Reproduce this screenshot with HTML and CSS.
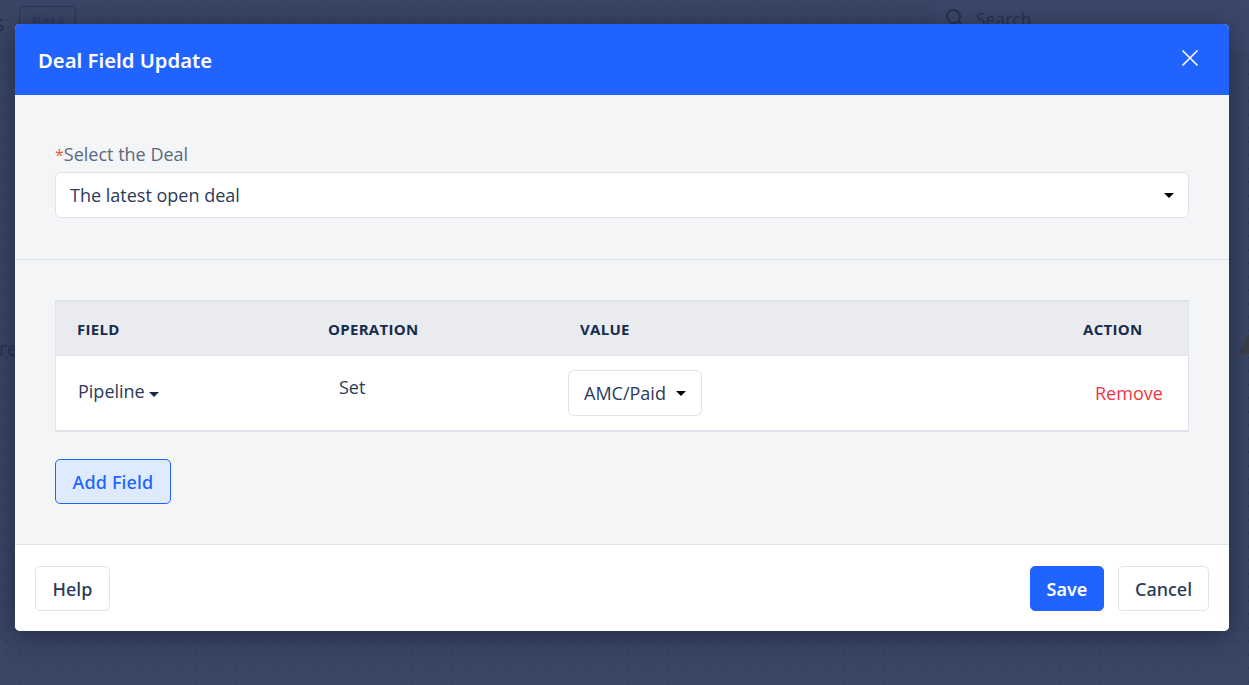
FILE: index.html
```html
<!DOCTYPE html>
<html lang="en">
<head>
<meta charset="utf-8">
<title>Deal Field Update</title>
<link rel="stylesheet" href="styles.css">
</head>
<body>
<div class="page">
  <div class="topbar">
    <span class="page-title">s</span>
    <span class="beta">Beta</span>
    <div class="search">
      <svg class="search-icon" width="20" height="20" viewBox="0 0 20 20"><circle cx="8.5" cy="8.5" r="6.5" fill="none" stroke="currentColor" stroke-width="2"/><path d="M13.5 13.5L19 19" stroke="currentColor" stroke-width="2"/></svg>
      <span>Search</span>
    </div>
  </div>
  <div class="behind-row">
    <span class="behind-text">re</span>
    <span class="warn"></span>
  </div>
</div>
<div class="overlay">
  <section class="modal">
    <header class="modal-head">
      <h1>Deal Field Update</h1>
      <svg class="close" width="18" height="18" viewBox="0 0 18 18"><path d="M1.5 1.5L16.5 16.5M16.5 1.5L1.5 16.5" stroke="#fff" stroke-width="1.6"/></svg>
    </header>
    <div class="modal-body">
      <div class="deal-section">
        <label class="deal-label"><span class="req">*</span>Select the Deal</label>
        <div class="select"><span>The latest open deal</span><i class="caret"></i></div>
      </div>
      <div class="fields-section">
        <div class="table">
          <div class="row head">
            <div class="c-field">FIELD</div>
            <div class="c-op">OPERATION</div>
            <div class="c-value">VALUE</div>
            <div class="c-action">ACTION</div>
          </div>
          <div class="row data">
            <div class="c-field pipeline">Pipeline <i class="caret navy"></i></div>
            <div class="c-op set">Set</div>
            <div class="c-value"><div class="mini-select"><span>AMC/Paid</span><i class="caret"></i></div></div>
            <div class="c-action remove">Remove</div>
          </div>
        </div>
        <button class="btn add">Add Field</button>
      </div>
    </div>
    <footer class="modal-foot">
      <button class="btn plain help">Help</button>
      <div class="foot-right">
        <button class="btn primary">Save</button>
        <button class="btn plain cancel">Cancel</button>
      </div>
    </footer>
  </section>
</div>
</body>
</html>
```
FILE: styles.css
```css
* { box-sizing: border-box; }
html, body { margin: 0; height: 100%; overflow: hidden; }
body {
  font-family: "Open Sans", "Noto Sans", sans-serif;
  color: #2b3a5a;
  background-color: #3a4666;
  background-image: radial-gradient(#323d5b 0.7px, transparent 0.9px);
  background-size: 13.5px 13.5px;
}
.page { height: 100%; }
.topbar {
  height: 53px;
  display: flex;
  align-items: center;
  border-bottom: 1px solid #354160;
  color: #27324f;
  font-size: 16px;
}
.page-title { margin: -9px 0 0 -6px; font-size: 22px; }
.beta {
  margin: -9px 0 0 15px;
  height: 31px;
  width: 57px;
  text-align: center;
  border: 1px solid #27385f;
  border-radius: 5px;
  line-height: 29px;
  font-size: 15px;
  font-weight: 600;
  color: #2a3a63;
}
.search {
  margin-left: auto;
  width: 314px;
  height: 53px;
  padding: 7px 0 0 10px;
  display: flex;
  gap: 11px;
  font-size: 17.5px;
  background: #3c486a;
}
.search-icon { margin-top: 1px; }
.behind-row {
  margin-top: 281px;
  display: flex;
  justify-content: space-between;
  color: #27324f;
}
.behind-text {
  margin: 1px 0 0 -1px;
  font-size: 20px;
}
.warn {
  width: 0;
  height: 0;
  margin-right: -11px;
  border-left: 11px solid transparent;
  border-right: 11px solid transparent;
  border-bottom: 20px solid #3d3f49;
}
.overlay {
  position: fixed;
  inset: 0;
  padding: 24px 20px 0 15px;
}
.modal {
  height: 607px;
  display: flex;
  flex-direction: column;
  border-radius: 5px;
  overflow: hidden;
  background: #fff;
  box-shadow: 0 4px 28px rgba(15, 20, 40, 0.55);
}
.modal-head {
  height: 71px;
  flex: none;
  background: #2163ff;
  display: flex;
  align-items: center;
  justify-content: space-between;
  padding: 2px 30px 0 23px;
  color: #fff;
}
.modal-head h1 {
  margin: 0;
  font-family: "Noto Sans", sans-serif;
  font-size: 20.25px;
  font-weight: 600;
  line-height: 1;
}
.close { margin-top: -6px; }
.modal-body {
  flex: 1;
  background: #f4f5f7;
  display: flex;
  flex-direction: column;
}
.deal-section {
  height: 165px;
  flex: none;
  padding: 47px 40px 0;
  border-bottom: 1px solid #e1e3ea;
}
.deal-label {
  display: block;
  height: 24px;
  font-size: 18px;
  line-height: 24px;
  color: #5a6880;
}
.req { color: #ef5a33; font-size: 16px; }
.select {
  margin-top: 6px;
  height: 46px;
  background: #fff;
  border: 1px solid #e1e3ea;
  border-radius: 6px;
  display: flex;
  align-items: center;
  justify-content: space-between;
  padding: 0 14px;
  font-size: 18px;
}
.caret {
  display: inline-block;
  width: 0;
  height: 0;
  border-left: 5.5px solid transparent;
  border-right: 5.5px solid transparent;
  border-top: 5.5px solid #000;
}
.caret.navy { border-top-color: #172b4d; vertical-align: 1px; }
.fields-section { padding: 40px 40px 0; }
.table {
  background: #fff;
  border: 1px solid #e1e3ea;
  border-top-width: 2px;
  border-bottom-width: 2px;
}
.row { display: flex; align-items: center; }
.row.head {
  height: 54px;
  background: #eaebef;
  border-bottom: 1px solid #e1e3ea;
  font-size: 15px;
  font-weight: 700;
  color: #172b4d;
  letter-spacing: 0.3px;
}
.row.data { height: 74px; font-size: 18px; }
.c-field { width: 272px; padding-left: 21px; flex: none; }
.c-op { width: 252px; flex: none; }
.c-value { flex: 1; }
.c-action { width: 105px; flex: none; }
.pipeline { padding-left: 22px; margin-top: -4px; }
.set { padding-left: 11px; margin-top: -12px; }
.data .c-value { margin-left: -12px; }
.mini-select {
  display: inline-flex;
  align-items: center;
  gap: 10px;
  height: 46px;
  width: 134px;
  padding: 0 14px 0 15px;
  border: 1px solid #e1e3ea;
  border-radius: 6px;
}
.remove { color: #f0363f; width: 93px; }
.btn {
  font-family: "Noto Sans", sans-serif;
  height: 45px;
  border-radius: 5px;
  font-size: 18px;
  font-weight: 500;
  padding: 0;
  cursor: pointer;
}
.add {
  margin-top: 27px;
  width: 116px;
  background: #deebff;
  border: 1px solid #2163ff;
  color: #2163ff;
  letter-spacing: 0.15px;
}
.modal-foot {
  height: 87px;
  flex: none;
  border-top: 1px solid #e1e3ea;
  background: #fff;
  display: flex;
  align-items: center;
  justify-content: space-between;
  padding: 0 20px;
}
.modal-foot .btn { padding-top: 1px; }
.foot-right { display: flex; gap: 14px; }
.plain { background: #fff; border: 1px solid #e1e3ea; color: #2b3a5a; }
.help { width: 75px; }
.cancel { width: 91px; }
.primary { width: 74px; background: #2163ff; border: 1px solid #2163ff; color: #fff; font-weight: 600; }
```
